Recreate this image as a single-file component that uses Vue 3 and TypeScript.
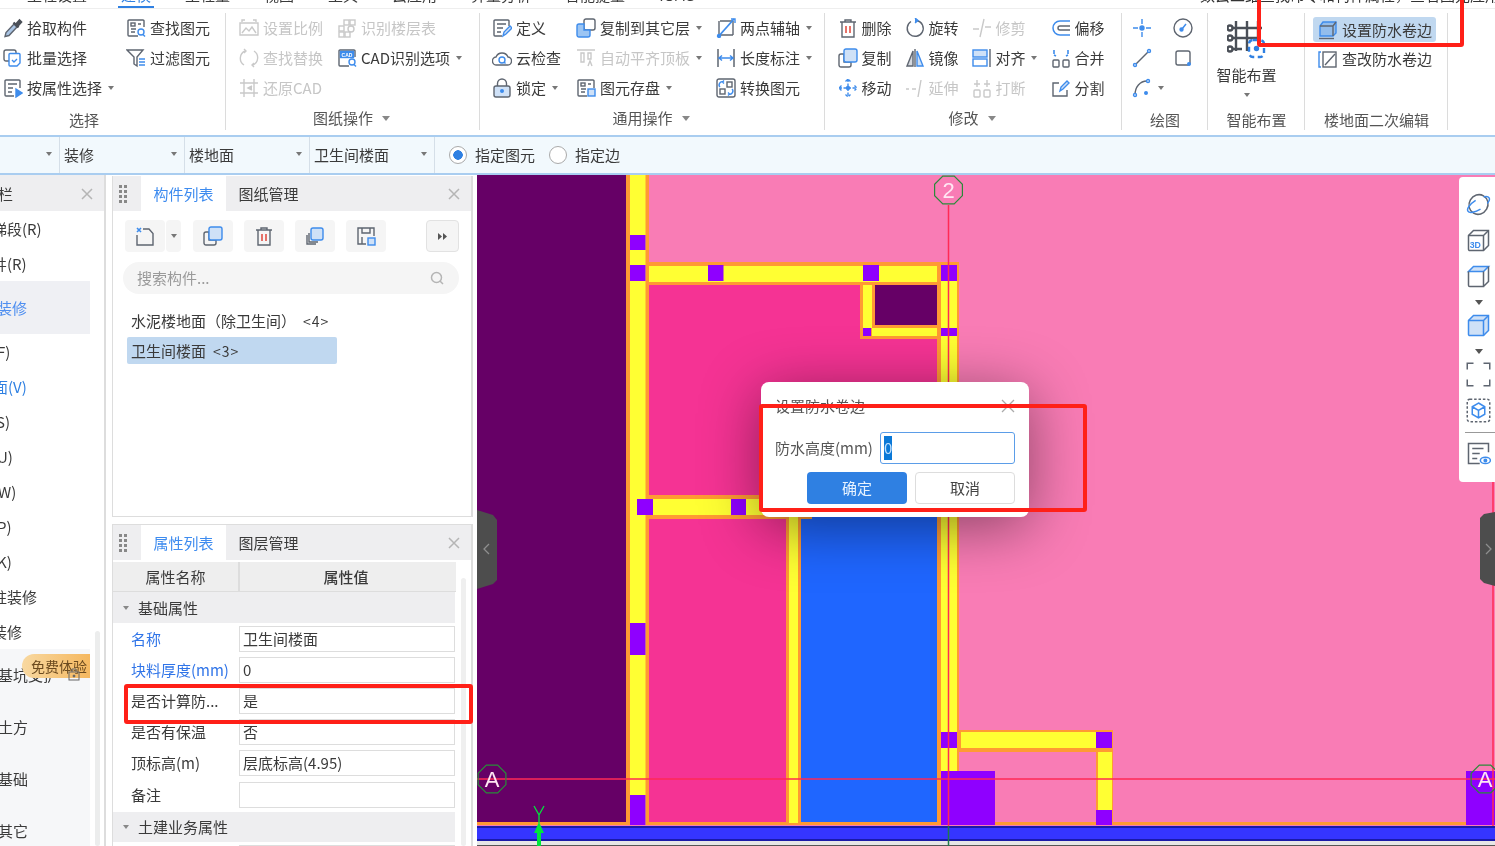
<script setup lang="ts">
interface Tool { i: string; t: string; d?: boolean; a?: boolean }
interface Box { x: number; y: number; w: number; h: number; c: string }

const b = '#3e8cec'
const lf = '#cfe1f7'

// 20x20 icon bodies, stroke colour comes from the parent svg
const icons: Record<string, string> = {
  pick: `<path d="M11 6l3 3-8 8.500-4 1 1-4z" fill="#a9c4e4"/><path d="M10.500 4.500l5 5M13 6.500l3.500-4 1.500 1.500-3.500 4" stroke-width="2.400" stroke="#4a4f57"/>`,
  batch: `<rect x="1" y="2" width="12" height="11" rx="2"/><path d="M6 6.500a1 1 0 0 1 1-1h9a1 1 0 0 1 1 1V15l-3 3H7a1 1 0 0 1-1-1z" fill="#fff" stroke="${b}"/><path d="M9 12l2 2 3-3" stroke="${b}"/>`,
  attr: `<path d="M17 10V3a1 1 0 0 0-1-1H3a1 1 0 0 0-1 1v14a1 1 0 0 0 1 1h8"/><path d="M5 6h9M5 10h5M5 14h4"/><path d="M13 11l6 4-6 4z" fill="${b}" stroke="${b}"/>`,
  find: `<path d="M18 9V3a1 1 0 0 0-1-1H3a1 1 0 0 0-1 1v14a1 1 0 0 0 1 1h9"/><rect x="5" y="5" width="4" height="3"/><path d="M12 6h3M5 11h5M5 14h4"/><circle cx="15" cy="14" r="3" stroke="${b}"/><path d="M17 16.500l2 2" stroke="${b}"/>`,
  filter: `<path d="M1 2h16l-6 7v9l-3-2V9z"/><path d="M13 11h6M13 14h6M13 17h6" stroke="${b}"/>`,
  scale: `<path d="M3 4v-2h3M14 2h3v2M1 5h18v12H1z"/><path d="M3 15l4-5 3 3 3-4 4 6"/>`,
  floors: `<rect x="7" y="2" width="5" height="5"/><rect x="13" y="2" width="5" height="5"/><rect x="2" y="8" width="5" height="5"/><rect x="2" y="14" width="5" height="5"/><rect x="8" y="14" width="5" height="5"/><circle cx="14" cy="11" r="3"/>`,
  replace: `<path d="M6 3a8 8 0 0 0-1 14M14 17a8 8 0 0 0 1-14"/><path d="M5 1l2 2-2 2M15 15l-2 2 2 2"/>`,
  cadopt: `<path d="M18 9V3a1 1 0 0 0-1-1H3a1 1 0 0 0-1 1v14a1 1 0 0 0 1 1h9"/><rect x="3.500" y="3.500" width="13" height="6" fill="${b}" stroke="${b}"/><text x="10" y="8.600" text-anchor="middle" font-size="5" font-weight="700" font-family="Liberation Sans" fill="#fff" stroke="none">CAD</text><circle cx="15" cy="14" r="3" stroke="${b}"/><path d="M17 16.500l2 2" stroke="${b}"/>`,
  restore: `<path d="M5 1v18M15 1v18M1 5h18M1 15h18"/><path d="M13 8l-4 2 4 2" fill="#c9c9c9"/>`,
  define: `<path d="M17 8V3a1 1 0 0 0-1-1H3a1 1 0 0 0-1 1v14a1 1 0 0 0 1 1h7"/><path d="M5 6h9M5 10h6M5 14h4"/><path d="M11 18l1-4 6-6 2 2-6 6z" fill="${lf}" stroke="${b}"/>`,
  cloud: `<path d="M5 17a4 4 0 0 1-1-8 6.500 6.500 0 0 1 12 0 4 4 0 0 1-1 8z"/><circle cx="10" cy="12" r="3" stroke="${b}"/><path d="M12 14l1.500 1.500" stroke="${b}"/>`,
  lock: `<rect x="2" y="8" width="16" height="11" rx="2" fill="${lf}"/><path d="M5.500 8V5.500a4.500 4.500 0 0 1 9 0V8"/><circle cx="10" cy="13" r="1.300" fill="${b}" stroke="${b}"/>`,
  copylayer: `<rect x="8" y="1" width="11" height="11" rx="2"/><path d="M3 6h5v6h6v5a2 2 0 0 1-2 2H3a2 2 0 0 1-2-2V8a2 2 0 0 1 2-2z" fill="#9cc5f3" stroke="${b}"/>`,
  autotop: `<path d="M1 2h18M5 5h3v9H5zM12 5h3v6h-3z"/><path d="M12 18l2-5 2 5"/>`,
  store: `<path d="M18 10V3a1 1 0 0 0-1-1H3a1 1 0 0 0-1 1v14a1 1 0 0 0 1 1h8"/><rect x="5" y="5" width="4" height="3"/><path d="M12 6h3M5 11h5M5 14h4"/><rect x="12" y="11" width="7" height="7" fill="${lf}" stroke="${b}"/>`,
  twopoint: `<path d="M4 3h13M17 3v14M3 3v14h14"/><path d="M2 19L18 1" stroke="${b}" stroke-width="1.800"/><circle cx="3" cy="18" r="1.500" fill="${b}" stroke="${b}"/><path d="M15 1h4v4" stroke="${b}"/>`,
  dimension: `<path d="M2 1v18M18 1v18" stroke-width="1.500"/><path d="M3 10h14M6 7.500L3 10l3 2.500M14 7.500l3 2.500-3 2.500" stroke="${b}" stroke-width="1.500"/>`,
  convert: `<rect x="1" y="1" width="18" height="18" rx="2"/><rect x="11" y="4" width="5" height="5"/><rect x="4" y="11" width="5" height="5"/><path d="M4 9a3 3 0 0 1 3-5M16 11a3 3 0 0 1-3 5M8 2.500L6.500 4 8 5.500M12 14.500l1.500 1.500-1.500 1.500" stroke="${b}"/>`,
  del: `<path d="M2 4h16M7 4V2h6v2M4 4v15h12V4"/><path d="M8 8v7M12 8v7" stroke="#e0453a" stroke-width="1.500"/>`,
  rotate: `<path d="M12 2.500A8 8 0 1 1 6 3.500"/><path d="M10 0l3 2.500-3 2.500" fill="${b}" stroke="${b}"/>`,
  trim: `<path d="M1 11h6M13 9h6M12 1L8 19"/>`,
  offset: `<path d="M19 3H9a7 7 0 0 0 0 14h10" stroke="${b}" stroke-width="1.500"/><path d="M19 8H9a2 2 0 0 0 0 4h10"/>`,
  copy: `<path d="M1 8a2 2 0 0 1 2-2h3v8h7v3a2 2 0 0 1-2 2H3a2 2 0 0 1-2-2z"/><rect x="6" y="1" width="13" height="13" rx="2" fill="${lf}" stroke="${b}"/>`,
  mirror: `<path d="M8 3L2 18h6z" fill="#d5d9df"/><path d="M12 3l6 15h-6z" fill="${lf}" stroke="${b}"/><path d="M10 1v18"/>`,
  align: `<rect x="1" y="2" width="14" height="7" stroke="${b}" fill="${lf}"/><rect x="1" y="11" width="14" height="7" stroke="${b}"/><path d="M18 1v18"/>`,
  merge: `<rect x="2" y="12" width="6" height="7" rx="1"/><rect x="12" y="12" width="6" height="7" rx="1"/><path d="M3 2v4M3 7l2 1M17 2v4M17 7l-2 1" stroke="${b}" stroke-width="1.600"/>`,
  move: `<path d="M10 1v18M1 10h18M7.500 3.500L10 1l2.500 2.500M7.500 16.500L10 19l2.500-2.500M3.500 7.500L1 10l2.500 2.500M16.500 7.500L19 10l-2.500 2.500" stroke="${b}" stroke-dasharray="3 1.500"/><circle cx="10" cy="10" r="1.500" fill="${b}" stroke="${b}"/>`,
  extend: `<path d="M1 11h3M7 11h4M16 2l-3 17"/>`,
  break: `<rect x="2" y="12" width="6" height="7" rx="1"/><rect x="12" y="12" width="6" height="7" rx="1"/><path d="M5 2v7M15 2v7M2 6h6M12 6h6"/>`,
  split: `<path d="M8 5H2v13h14v-6"/><path d="M9 13l1-4 6-6 2 2-6 6z" fill="${lf}" stroke="${b}"/>`,
  point: `<path d="M10 1v5M10 14v5M1 10h5M14 10h5" stroke="${b}"/><circle cx="10" cy="10" r="2" fill="${b}" stroke="${b}"/>`,
  gauge: `<circle cx="10" cy="10" r="9"/><path d="M9 11l4-5" stroke="${b}" stroke-width="1.500"/><circle cx="8.500" cy="11.500" r="1.500" fill="${b}" stroke="${b}"/>`,
  line: `<path d="M4 16L16 4"/><circle cx="3" cy="17" r="1.500" fill="#fff" stroke="${b}"/><circle cx="17" cy="3" r="1.500" fill="#fff" stroke="${b}"/>`,
  rect: `<rect x="3" y="3" width="14" height="14" rx="2"/><circle cx="16" cy="16" r="1.300" fill="${b}" stroke="${b}"/>`,
  arc: `<path d="M3 17C3 9 8 3 15 3"/><circle cx="3" cy="17" r="1.500" fill="#fff" stroke="${b}"/><circle cx="16" cy="3" r="1.500" fill="#fff" stroke="${b}"/><circle cx="14" cy="15" r="1.300" fill="${b}" stroke="${b}"/>`,
  wp: `<path d="M2 6l3-4h13v11l-3 3H2z" fill="#93bdec" stroke="${b}"/><path d="M2 6h13v10M15 6l3-4"/><path d="M1 18.500h15"/>`,
  wpedit: `<path d="M3 3H1v15h2" stroke="${b}"/><rect x="5" y="3" width="13" height="15"/><path d="M7 16L17 5"/>`,
  newdoc: `<path d="M8 3h6l4 4.500V19H2V9"/><path d="M2 2l4 4M6 2L2 6" stroke="${b}" stroke-width="1.600"/>`,
  copy2: `<path d="M2 9v9h9"/><path d="M4 7v9h9"/><rect x="6" y="2" width="12" height="12" rx="2" fill="${lf}" stroke="${b}"/>`,
  save: `<path d="M10 18H2V2h16v8"/><path d="M6 2v5h8V2M6 18v-7"/><rect x="12" y="12" width="7" height="7" fill="${lf}" stroke="${b}"/>`,
  orbit: `<ellipse cx="10" cy="10" rx="7.500" ry="8" transform="rotate(30 10 10)"/><ellipse cx="10" cy="10" rx="10" ry="4" transform="rotate(-32 10 10)" stroke="${b}" stroke-dasharray="22 7" stroke-dashoffset="-12"/>`,
  d3: `<path d="M2 6l4-4h12v12l-4 4H3a1 1 0 0 1-1-1z"/><path d="M2 6h12v12M14 6l4-4"/><text x="3" y="16" font-size="7" font-weight="700" font-family="Liberation Sans" fill="${b}" stroke="none">3D</text>`,
  cubetop: `<path d="M2 6l4-4h12l-4 4z" fill="${lf}" stroke="${b}"/><path d="M2 6v11a1 1 0 0 0 1 1h11V6M14 18l4-4V2"/>`,
  cubefront: `<path d="M2 6l4-4h12v12l-4 4H3a1 1 0 0 1-1-1z" fill="${lf}" stroke="${b}"/><path d="M2 6h12v12M14 6l4-4" stroke="${b}"/>`,
  corners: `<path d="M1 6V1h5M14 1h5v5M19 14v5h-5M6 19H1v-5"/>`,
  dashcube: `<rect x="1" y="1" width="18" height="18" rx="2" stroke-dasharray="2 1.500"/><path d="M10 4l5 3v6l-5 3-5-3V7zM5 7l5 3 5-3M10 10v6" stroke="${b}"/>`,
  listeye: `<path d="M18 9V2H2v16h9"/><path d="M5 6h9M5 10h6M5 14h4"/><ellipse cx="15.500" cy="15.500" rx="4" ry="2.500" stroke="${b}"/><circle cx="15.500" cy="15.500" r="1" fill="${b}" stroke="${b}"/>`,
}

const mainTabs = ['工程设置', '建模', '工程量', '视图', '工具', '云应用', '算量分析', '智能提量', 'IGMS']

const select: Tool[] = [
  { i: 'pick', t: '拾取构件' }, { i: 'find', t: '查找图元' },
  { i: 'batch', t: '批量选择' }, { i: 'filter', t: '过滤图元' },
  { i: 'attr', t: '按属性选择', a: true },
]
const drawing: Tool[] = [
  { i: 'scale', t: '设置比例', d: true }, { i: 'floors', t: '识别楼层表', d: true },
  { i: 'replace', t: '查找替换', d: true }, { i: 'cadopt', t: 'CAD识别选项', a: true },
  { i: 'restore', t: '还原CAD', d: true },
]
const common: Tool[] = [
  { i: 'define', t: '定义' }, { i: 'copylayer', t: '复制到其它层', a: true }, { i: 'twopoint', t: '两点辅轴', a: true },
  { i: 'cloud', t: '云检查' }, { i: 'autotop', t: '自动平齐顶板', d: true, a: true }, { i: 'dimension', t: '长度标注', a: true },
  { i: 'lock', t: '锁定', a: true }, { i: 'store', t: '图元存盘', a: true }, { i: 'convert', t: '转换图元' },
]
const modify: Tool[] = [
  { i: 'del', t: '删除' }, { i: 'rotate', t: '旋转' }, { i: 'trim', t: '修剪', d: true }, { i: 'offset', t: '偏移' },
  { i: 'copy', t: '复制' }, { i: 'mirror', t: '镜像' }, { i: 'align', t: '对齐', a: true }, { i: 'merge', t: '合并' },
  { i: 'move', t: '移动' }, { i: 'extend', t: '延伸', d: true }, { i: 'break', t: '打断', d: true }, { i: 'split', t: '分割' },
]

const sideItems = [
  { t: '梯段(R)', x: -8 }, { t: '井(R)', x: -8 },
  { t: '装修', x: -3, on: true, tall: true },
  { t: 'F)', x: -3 }, { t: '面(V)', x: -7, blue: true }, { t: 'S)', x: -4 }, { t: 'U)', x: -3 },
  { t: 'W)', x: -2 }, { t: 'P)', x: -3 }, { t: 'K)', x: -3 }, { t: '柱装修', x: -8 }, { t: '装修', x: -8 },
]
const sideLower = ['基坑支护', '土方', '基础', '其它']

const propRows = [
  { n: '名称', v: '卫生间楼面', blue: true },
  { n: '块料厚度(mm)', v: '0', blue: true },
  { n: '是否计算防...', v: '是' },
  { n: '是否有保温', v: '否' },
  { n: '顶标高(m)', v: '层底标高(4.95)' },
  { n: '备注', v: '' },
]

const O = '#ff9a33'
const Y = '#ffff33'
const P = '#8f00ff'
const wall = (x: number, y: number, w: number, h: number): Box => ({ x, y, w, h, c: O })
const fill = (x: number, y: number, w: number, h: number): Box => ({ x, y, w, h, c: Y })
const sq = (x: number, y: number, w: number, h: number): Box => ({ x, y, w, h, c: P })

const shapes: Box[] = [
  { x: 477, y: 175, w: 150, h: 648, c: '#660066' },
  { x: 649, y: 285, w: 292, h: 212, c: '#f53394' },
  { x: 649, y: 517, w: 137, h: 306, c: '#f53394' },
  { x: 801, y: 517, w: 137, h: 306, c: '#1f66ff' },
  wall(477, 822, 989, 3),
  wall(626, 175, 23, 650), wall(638, 262, 321, 23), wall(860, 283, 15, 56), wall(860, 325, 99, 14),
  wall(937, 262, 22, 563), wall(637, 495, 175, 24), wall(786, 515, 15, 310),
  wall(957, 730, 156, 22), wall(1096, 730, 17, 95),
  { x: 875, y: 285, w: 62, h: 40, c: '#660066' },
  fill(630, 175, 15.5, 650), fill(649, 266, 288, 16), fill(863, 285, 9, 43), fill(872, 328, 65, 8),
  fill(941, 265, 16, 560), fill(641, 499, 170, 16), fill(789, 517, 9, 306),
  fill(961, 732, 135, 16), fill(1098, 752, 14, 58),
  sq(630, 235, 15.5, 15), sq(630, 265, 15.5, 16), sq(708, 265, 15.5, 16), sq(863, 265, 16, 16), sq(941, 265, 16, 16),
  sq(863, 328, 8, 8), sq(941, 328, 16, 8), sq(637, 499, 16, 16), sq(731, 499, 15, 16),
  sq(630, 623, 15.5, 32), sq(630, 795, 15.5, 30), sq(941, 732, 16, 16), sq(1096, 732, 16, 16),
  sq(1096, 810, 16, 15), sq(941, 771, 54, 54), sq(1466, 771, 29, 54),
  { x: 477, y: 826, w: 1018, h: 15, c: '#1a1aa8' },
  { x: 477, y: 828, w: 1018, h: 11, c: '#3535ff' },
  { x: 477, y: 841, w: 1018, h: 4, c: '#e6e6e6' },
  { x: 477, y: 845, w: 1018, h: 1, c: '#555555' },
]

function ring(cx: number, cy: number, r = 15, n = 8): string {
  const pts: string[] = []
  for (let k = 0; k < n; k++) {
    const a = (k / n) * Math.PI * 2 + Math.PI / 8
    pts.push(`${(cx + Math.cos(a) * r).toFixed(1)},${(cy + Math.sin(a) * r).toFixed(1)}`)
  }
  return pts.join(' ')
}
const marks = [
  { x: 948.5, y: 190, t: '2' },
  { x: 492, y: 779, t: 'A' },
  { x: 1485, y: 779, t: 'A' },
]

const railTop = ['orbit', 'd3', 'cubetop']
</script>

<template>
  <div class="app">
    <div class="menu">
      <span v-for="(m, k) in mainTabs" :key="m" class="menu-tab" :class="{ on: k === 1 }">{{ m }}</span>
      <span class="menu-search">数云二维查找命令和构件属性，查看图元应用</span>
    </div>

    <div class="ribbon">
      <section class="group g1">
        <div class="tools">
          <div v-for="x in select" :key="x.t" class="tool" :class="{ off: x.d }">
            <svg class="ico" viewBox="0 0 20 20" fill="none" :stroke="x.d ? '#c9c9c9' : '#5e6570'" stroke-width="1.400" v-html="icons[x.i]"></svg>
            <span>{{ x.t }}</span><i v-if="x.a" class="caret"></i>
          </div>
        </div>
        <div class="glabel low">选择</div>
      </section>
      <section class="group g2">
        <div class="tools">
          <div v-for="x in drawing" :key="x.t" class="tool" :class="{ off: x.d }">
            <svg class="ico" viewBox="0 0 20 20" fill="none" :stroke="x.d ? '#c9c9c9' : '#5e6570'" stroke-width="1.400" v-html="icons[x.i]"></svg>
            <span>{{ x.t }}</span><i v-if="x.a" class="caret"></i>
          </div>
        </div>
        <div class="glabel">图纸操作<i class="caret big"></i></div>
      </section>
      <section class="group g3">
        <div class="tools">
          <div v-for="x in common" :key="x.t" class="tool" :class="{ off: x.d }">
            <svg class="ico" viewBox="0 0 20 20" fill="none" :stroke="x.d ? '#c9c9c9' : '#5e6570'" stroke-width="1.400" v-html="icons[x.i]"></svg>
            <span>{{ x.t }}</span><i v-if="x.a" class="caret"></i>
          </div>
        </div>
        <div class="glabel">通用操作<i class="caret big"></i></div>
      </section>
      <section class="group g4">
        <div class="tools">
          <div v-for="x in modify" :key="x.t" class="tool" :class="{ off: x.d }">
            <svg class="ico" viewBox="0 0 20 20" fill="none" :stroke="x.d ? '#c9c9c9' : '#5e6570'" stroke-width="1.400" v-html="icons[x.i]"></svg>
            <span>{{ x.t }}</span><i v-if="x.a" class="caret"></i>
          </div>
        </div>
        <div class="glabel">修改<i class="caret big"></i></div>
      </section>
      <section class="group g5">
        <div class="tools">
          <div v-for="x in ['point', 'gauge', 'line', 'rect', 'arc']" :key="x" class="tool">
            <svg class="ico" viewBox="0 0 20 20" fill="none" stroke="#5e6570" stroke-width="1.400" v-html="icons[x]"></svg>
            <i v-if="x === 'arc'" class="caret"></i>
          </div>
        </div>
        <div class="glabel low">绘图</div>
      </section>
      <section class="group g6">
        <div class="smart">
          <svg width="40" height="40" viewBox="0 0 40 40" fill="none" stroke="#4a4f57" stroke-width="2.400">
            <path d="M9 1v30M20 1v30M31 1v16M1 8h34M1 18h30M1 29h14" />
            <circle cx="3" cy="8" r="2.500" fill="#fff" />
            <circle cx="3" cy="18" r="2.500" fill="#fff" />
            <circle cx="3" cy="29" r="2.500" fill="#fff" />
            <rect x="22" y="20" width="15" height="17" rx="4" stroke="#2f80e2" stroke-dasharray="5 3.500" />
            <circle cx="29.500" cy="28.500" r="1.500" fill="#2f80e2" stroke="#2f80e2" />
          </svg>
          <span>智能布置</span>
          <i class="caret"></i>
        </div>
        <div class="glabel low">智能布置</div>
      </section>
      <section class="group g7">
        <div class="stack">
          <div class="tool hot">
            <svg class="ico" viewBox="0 0 20 20" fill="none" stroke="#5e6570" stroke-width="1.400" v-html="icons.wp"></svg>
            <span>设置防水卷边</span>
          </div>
          <div class="tool plain">
            <svg class="ico" viewBox="0 0 20 20" fill="none" stroke="#5e6570" stroke-width="1.400" v-html="icons.wpedit"></svg>
            <span>查改防水卷边</span>
          </div>
        </div>
        <div class="glabel low">楼地面二次编辑</div>
      </section>
    </div>

    <div class="selector">
      <div class="sel first"><i class="caret"></i></div>
      <div class="sel">装修<i class="caret"></i></div>
      <div class="sel">楼地面<i class="caret"></i></div>
      <div class="sel">卫生间楼面<i class="caret"></i></div>
      <label class="radio"><i class="dot on"></i>指定图元</label>
      <label class="radio second"><i class="dot"></i>指定边</label>
    </div>

    <div class="main">
      <aside class="side">
        <div class="side-head"><span>栏</span><svg class="close" viewBox="0 0 12 12"><path d="M1 1l10 10M11 1L1 11" /></svg></div>
        <div v-for="s in sideItems" :key="s.t + s.x" class="side-item" :class="{ on: s.on, tall: s.tall, blue: s.blue }">
          <span :style="{ marginLeft: s.x + 'px' }">{{ s.t }}</span>
        </div>
        <div class="side-lower">
          <div v-for="s in sideLower" :key="s" class="side-item tall"><span class="lower-text">{{ s }}</span></div>
          <span class="badge">免费体验</span>
          <svg class="side-lock" viewBox="0 0 12 14" fill="none" stroke="#666"><rect x="1" y="5" width="10" height="8" /><path d="M4 5V2h4v3" /><circle cx="6" cy="9" r="1" fill="#666" /></svg>
        </div>
        <div class="side-scroll"></div>
      </aside>

      <div class="panels">
        <section class="panel list-panel">
          <header class="p-head">
            <span class="grip"><i v-for="n in 8" :key="n"></i></span>
            <span class="p-tab on">构件列表</span>
            <span class="p-tab">图纸管理</span>
            <svg class="close end" viewBox="0 0 12 12"><path d="M1 1l10 10M11 1L1 11" /></svg>
          </header>
          <div class="p-tools">
            <button class="pbtn wide"><svg class="ico" viewBox="0 0 20 20" fill="none" stroke="#5e6570" stroke-width="1.400" v-html="icons.newdoc"></svg></button>
            <button class="pbtn drop"><i class="caret"></i></button>
            <button v-for="x in ['copy', 'del', 'copy2', 'save']" :key="x" class="pbtn"><svg class="ico" viewBox="0 0 20 20" fill="none" stroke="#5e6570" stroke-width="1.400" v-html="icons[x]"></svg></button>
            <button class="pbtn more"><svg width="9" height="7" viewBox="0 0 9 7" fill="#555"><path d="M0 0l4 3.500L0 7zM5 0l4 3.500L5 7z" /></svg></button>
          </div>
          <div class="search">
            <span>搜索构件...</span>
            <svg width="14" height="14" viewBox="0 0 14 14" fill="none" stroke="#b5b5b5" stroke-width="1.500"><circle cx="6.500" cy="6.500" r="5" /><path d="M10 10l3 3" /></svg>
          </div>
          <div class="comp">水泥楼地面（除卫生间）<em>&lt;4&gt;</em></div>
          <div class="comp picked">卫生间楼面<em>&lt;3&gt;</em></div>
        </section>

        <section class="panel prop-panel">
          <header class="p-head">
            <span class="grip"><i v-for="n in 8" :key="n"></i></span>
            <span class="p-tab on">属性列表</span>
            <span class="p-tab">图层管理</span>
            <svg class="close end" viewBox="0 0 12 12"><path d="M1 1l10 10M11 1L1 11" /></svg>
          </header>
          <div class="t-head"><span class="tn">属性名称</span><span class="tv">属性值</span></div>
          <div class="t-group"><i class="tri"></i>基础属性</div>
          <div v-for="r in propRows" :key="r.n" class="t-row">
            <span class="rn" :class="{ blue: r.blue }">{{ r.n }}</span>
            <span class="rv">{{ r.v }}</span>
          </div>
          <div class="t-group last"><i class="tri"></i>土建业务属性</div>
          <div class="t-row"><span class="rn"></span><span class="rv"></span></div>
          <div class="prop-scroll"></div>
        </section>
      </div>

      <div class="canvas">
        <svg class="drawing" viewBox="477 175 1018 671" width="1018" height="671">
          <rect x="477" y="175" width="1018" height="671" fill="#f97cb5" />
          <rect v-for="(s, k) in shapes" :key="k" :x="s.x" :y="s.y" :width="s.w" :height="s.h" :fill="s.c" />
          <path d="M948.500 205V826M477 779H1495M1493 480V826" stroke="#ff2a55" stroke-width="1.500" fill="none" />
          <path d="M948.500 826V846" stroke="#1f7a4a" stroke-width="1.500" />
          <g v-for="m in marks" :key="m.x">
            <polygon :points="ring(m.x, m.y)" fill="none" stroke="#2a8a3a" stroke-width="1.200" />
            <text :x="m.x" :y="m.y + 8" text-anchor="middle" class="mark">{{ m.t }}</text>
          </g>
          <path d="M477 510l16 5 4 5v60l-4 4-16 5z" fill="#4d4d4d" />
          <path d="M1495 512l-11 2-4 4v61l4 4 11 3z" fill="#4d4d4d" />
          <path d="M489 544l-5 5 5 5M1486 544l5 5-5 5" fill="none" stroke="#8e8e8e" stroke-width="1.300" />
          <path d="M534 806l5 9 5-9M539 815v8" fill="none" stroke="#00e63c" stroke-width="1.300" />
          <path d="M539 822l-5 11h3v13h4v-13h3z" fill="#00e63c" />
        </svg>

        <div class="rail">
          <svg v-for="x in railTop" :key="x" class="rail-ico" viewBox="0 0 20 20" fill="none" stroke="#5e6570" stroke-width="1.200" v-html="icons[x]"></svg>
          <i class="rail-arrow"></i>
          <svg class="rail-ico" viewBox="0 0 20 20" fill="none" stroke="#5e6570" stroke-width="1.200" v-html="icons.cubefront"></svg>
          <i class="rail-arrow"></i>
          <svg class="rail-ico" viewBox="0 0 20 20" fill="none" stroke="#5e6570" stroke-width="1.200" v-html="icons.corners"></svg>
          <svg class="rail-ico" viewBox="0 0 20 20" fill="none" stroke="#5e6570" stroke-width="1.200" v-html="icons.dashcube"></svg>
          <hr />
          <svg class="rail-ico" viewBox="0 0 20 20" fill="none" stroke="#5e6570" stroke-width="1.200" v-html="icons.listeye"></svg>
        </div>

        <div class="dialog">
          <div class="d-title">设置防水卷边<svg class="d-close" viewBox="0 0 14 14"><path d="M1 1l12 12M13 1L1 13" /></svg></div>
          <div class="d-field">
            <span>防水高度(mm)</span>
            <div class="d-input"><b>0</b></div>
          </div>
          <div class="d-actions">
            <button class="ok">确定</button>
            <button class="no">取消</button>
          </div>
        </div>
      </div>
    </div>

    <div class="mark-box one"></div>
    <div class="mark-box two"></div>
    <div class="mark-box three"></div>
  </div>
</template>

<style>
html, body { margin: 0; background: #fff; }
</style>

<style scoped>
.app {
  position: relative;
  width: 1495px;
  height: 846px;
  overflow: hidden;
  display: flex;
  flex-direction: column;
  background: #fff;
  color: #3a3a3a;
  font: 15px/20px "Noto Sans CJK SC", "Noto Sans", sans-serif;
  filter: blur(0.3px);
}
i { display: block; font-style: normal; }

.menu {
  position: relative;
  height: 9px;
  flex: none;
  display: flex;
  gap: 34px;
  padding-left: 27px;
  border-bottom: 1px solid #eee;
  box-sizing: border-box;
}
.menu-tab { position: relative; margin-top: -15px; height: 23px; white-space: nowrap; }
.menu-tab.on { color: #2f80e2; }
.menu-tab.on::after {
  content: "";
  position: absolute;
  left: -3px;
  right: -3px;
  bottom: 0;
  height: 2px;
  background: #2f80e2;
}
.menu-search {
  position: absolute;
  left: 1200px;
  top: -15px;
  white-space: nowrap;
  color: #333;
}

.ribbon { height: 126px; flex: none; display: flex; }
.group {
  position: relative;
  box-sizing: border-box;
  flex: none;
  padding-top: 4px;
}
.group::after {
  content: "";
  position: absolute;
  right: 0;
  top: 4px;
  height: 117px;
  width: 1px;
  background: #dcdcdc;
}
.tools { display: grid; grid-auto-rows: 30px; }
.tool { display: flex; align-items: center; gap: 4px; white-space: nowrap; min-width: 0; }
.tool.off { color: #c6c6c6; }
.ico { width: 20px; height: 20px; flex: none; }
.caret {
  width: 0;
  height: 0;
  margin-left: 2px;
  border: 3px solid transparent;
  border-top: 4px solid #777;
  border-bottom: 0;
  flex: none;
}
.caret.big { margin-left: 9px; border-width: 5px 4.5px 0; border-top-color: #888; border-bottom: 0; }
.glabel {
  position: absolute;
  left: 0;
  right: 3px;
  top: 99px;
  display: flex;
  justify-content: center;
  align-items: center;
  color: #555;
}
.glabel.low { top: 101px; right: 0; }
.g1 { width: 226px; padding-left: 3px; }
.g1 .glabel { right: 58px; }
.g1 .tools { grid-template-columns: 123px 100px; }
.g2 { width: 254px; padding-left: 13px; }
.g2 .tools { grid-template-columns: 98px 140px; }
.g3 { width: 345px; padding-left: 12px; }
.g3 .tools { grid-template-columns: 84px 140px 110px; }
.g4 { width: 297px; padding-left: 13px; }
.g4 .tools { grid-template-columns: 67px 67px 79px 60px; }
.g4 .tool { gap: 3.5px; }
.g5 { width: 86px; padding-left: 10px; }
.g5 .tools { grid-template-columns: 41px 34px; }
.g6 { width: 97px; }
.g7 { width: 143px; }
.smart {
  display: flex;
  flex-direction: column;
  align-items: center;
  padding: 7px 20px 0 0;
}
.smart span { margin-top: 5px; line-height: 20px; }
.smart .caret { margin: 8px 0 0; }
.stack { padding-left: 8px; }
.tool.hot {
  width: 123px;
  height: 25px;
  margin-top: 4px;
  padding-left: 5px;
  box-sizing: border-box;
  background: #c0d8f0;
  border-radius: 3px;
}
.tool.plain { height: 30px; margin-top: 2px; padding-left: 5px; }

.selector {
  height: 40px;
  flex: none;
  display: flex;
  align-items: center;
  box-sizing: border-box;
  background: #f2f9fd;
  border-top: 2px solid #a9cdf0;
  border-bottom: 2px solid #a9cdf0;
}
.sel {
  position: relative;
  width: 125px;
  height: 100%;
  flex: none;
  box-sizing: border-box;
  padding-left: 4px;
  display: flex;
  align-items: center;
  border-right: 1px solid #d5dfe8;
}
.sel.first { width: 60px; }
.sel .caret { position: absolute; right: 7px; top: 15px; }
.radio { display: flex; align-items: center; gap: 8px; margin-left: 14px; }
.radio.second { margin-left: 14px; }
.dot {
  width: 18px;
  height: 18px;
  box-sizing: border-box;
  border-radius: 50%;
  border: 1px solid #aaa;
  background: #fff;
}
.dot.on { background: radial-gradient(circle, #2f80e2 0 4.5px, #fff 5px); }

.main { flex: 1; min-height: 0; display: flex; }

.side {
  position: relative;
  width: 106px;
  flex: none;
  box-sizing: border-box;
  border-right: 2px solid #ddd;
}
.side-head {
  height: 36px;
  display: flex;
  align-items: center;
  justify-content: space-between;
  padding: 2px 11px 0 0;
  box-sizing: border-box;
  background: #eeeef0;
}
.side-head span { margin-left: -2px; }
.close { width: 12px; height: 12px; fill: none; stroke: #b5b5b5; stroke-width: 1.5; }
.side-item {
  width: 90px;
  height: 35px;
  display: flex;
  align-items: center;
  white-space: nowrap;
  overflow: hidden;
}
.side-item.tall { height: 52px; }
.side-item.on { height: 53px; background: #eff0f4; color: #4f8ff0; }
.side-item.blue { color: #2f80e2; }
.side-lower {
  position: absolute;
  left: 0;
  top: 474px;
  width: 90px;
  background: #f6f7f9;
}
.lower-text { margin-left: -2px; }
.badge {
  position: absolute;
  left: 22px;
  top: 5px;
  width: 68px;
  height: 24px;
  line-height: 24px;
  padding-left: 9px;
  box-sizing: border-box;
  font-size: 14px;
  white-space: nowrap;
  border-radius: 12px 0 0 12px;
  background: linear-gradient(90deg, #f8d8a0, #f5b860);
  color: #6b4a1f;
}
.side-lock { position: absolute; left: 68px; top: 18px; width: 12px; height: 14px; }
.side-scroll {
  position: absolute;
  left: 95px;
  top: 456px;
  bottom: 0;
  width: 5px;
  border-radius: 3px;
  background: #eceded;
}

.panels {
  width: 361px;
  flex: none;
  margin-left: 6px;
  display: flex;
  flex-direction: column;
  gap: 7px;
}
.panel {
  position: relative;
  box-sizing: border-box;
  border: 1px solid #ddd;
  border-width: 1px 2px 1px 1px;
}
.list-panel { height: 341px; margin-top: 1px; border-top: 0; }
.prop-panel { flex: 1; min-height: 0; overflow: hidden; border-bottom: 0; }
.p-head {
  height: 35px;
  display: flex;
  align-items: center;
  background: #eeeef0;
}
.grip {
  width: 8px;
  margin: 0 14px 0 6px;
  display: grid;
  grid-template-columns: 3px 3px;
  gap: 2px;
}
.grip i { width: 3px; height: 3px; background: #888; }
.p-tab {
  width: 85px;
  height: 100%;
  display: flex;
  align-items: center;
  justify-content: center;
}
.p-tab.on { background: #fff; color: #3d8bef; }
.close.end { margin-left: auto; margin-right: 11px; }

.p-tools { display: flex; align-items: flex-start; padding: 9px 0 0 12px; height: 32px; }
.pbtn {
  width: 40px;
  height: 32px;
  padding: 0;
  margin-right: 11px;
  border: 0;
  border-radius: 4px;
  background: #f5f5f5;
  display: flex;
  align-items: center;
  justify-content: center;
}
.pbtn.wide { margin-right: 1px; }
.pbtn.drop { width: 15px; margin-right: 12px; }
.pbtn.drop .caret { margin: 0; }
.pbtn.more { width: 33px; margin: 0 0 0 29px; border: 1px solid #e2e2e2; }
.search {
  height: 32px;
  margin: 10px 12px 0 10px;
  padding: 0 15px 0 14px;
  display: flex;
  align-items: center;
  justify-content: space-between;
  border-radius: 16px;
  background: #f5f5f5;
  color: #9a9a9a;
}
.comp {
  height: 27px;
  line-height: 27px;
  margin-left: 14px;
  padding-left: 4px;
  white-space: nowrap;
}
.comp em { font-style: normal; margin-left: 7px; letter-spacing: 1px; font-size: 14px; }
.search + .comp { margin-top: 13px; margin-bottom: 3px; }
.comp.picked { width: 206px; border-radius: 2px; background: #c0d8f0; }

.t-head {
  display: flex;
  width: 343px;
  height: 30px;
  margin-top: 2px;
  background: #eeeeee;
  border-bottom: 1px solid #ddd;
  box-sizing: border-box;
  line-height: 29px;
  text-align: center;
}
.tn { width: 125px; border-right: 2px solid #ddd; }
.tv { flex: 1; font-weight: 500; padding-right: 4px; }
.t-group {
  width: 342px;
  height: 31px;
  display: flex;
  align-items: center;
  padding-left: 10px;
  box-sizing: border-box;
  background: #eeeef0;
}
.t-group.last { height: 30px; margin-top: 2px; }
.tri {
  width: 0;
  height: 0;
  margin-right: 9px;
  border: 3.5px solid transparent;
  border-top: 4px solid #888;
  border-bottom: 0;
}
.t-row { display: flex; align-items: center; width: 342px; height: 31.2px; }
.rn {
  width: 126px;
  padding-left: 18px;
  box-sizing: border-box;
  white-space: nowrap;
  flex: none;
}
.rn.blue { color: #2f74e8; }
.rv {
  flex: 1;
  height: 26px;
  line-height: 24px;
  padding-left: 3px;
  box-sizing: border-box;
  border: 1px solid #ddd;
}
.prop-scroll {
  position: absolute;
  left: 348px;
  top: 53px;
  bottom: 0;
  width: 5px;
  border-radius: 3px;
  background: #efefef;
}

.canvas { position: relative; width: 1018px; margin-left: 4px; flex: none; }
.drawing { display: block; }
.mark { font: 300 22px "Liberation Sans", sans-serif; fill: #ffe6f3; }

.rail {
  position: absolute;
  left: 982px;
  top: 2px;
  width: 36px;
  height: 305px;
  box-sizing: border-box;
  padding: 15px 0 0 7px;
  display: flex;
  flex-direction: column;
  background: #fff;
  border-radius: 4px 0 0 4px;
}
.rail-ico { width: 25px; height: 25px; margin-bottom: 11px; flex: none; }
.rail-arrow {
  width: 0;
  height: 0;
  margin: 0 0 8px 9px;
  border: 4px solid transparent;
  border-top: 5px solid #555;
  border-bottom: 0;
}
.rail hr { width: 30px; margin: -2px 0 8px -1px; border: 0; border-top: 1px solid #999; }

.dialog {
  position: absolute;
  left: 284px;
  top: 207px;
  width: 268px;
  height: 135px;
  box-sizing: border-box;
  padding: 14px 14px 0;
  background: #fff;
  border-radius: 8px;
  box-shadow: 0 10px 60px rgba(0, 0, 0, 0.45);
}
.d-title {
  position: relative;
  line-height: 20px;
  color: #555;
  white-space: nowrap;
}
.d-close {
  position: absolute;
  right: 0;
  top: 3px;
  width: 14px;
  height: 14px;
  fill: none;
  stroke: #aaa;
  stroke-width: 1.3;
}
.d-field {
  display: flex;
  align-items: center;
  justify-content: space-between;
  margin-top: 16px;
  white-space: nowrap;
  color: #555;
}
.d-input {
  width: 135px;
  height: 32px;
  box-sizing: border-box;
  padding: 3px;
  border: 1px solid #5b9de8;
  border-radius: 3px;
}
.d-input b {
  display: block;
  width: 8px;
  height: 24px;
  line-height: 24px;
  font-weight: 400;
  background: #0a78d7;
  color: #bfe0ff;
}
.d-actions { display: flex; justify-content: flex-end; gap: 8px; margin-top: 8px; }
.d-actions button {
  width: 100px;
  height: 32px;
  padding: 0;
  border-radius: 4px;
  font: inherit;
}
.ok { border: 0; background: #2f80e2; color: #e8f3ff; }
.no { border: 1px solid #ddd; background: #fff; color: #444; }

.mark-box {
  position: absolute;
  box-sizing: border-box;
  border: 4px solid #ff2018;
  border-radius: 3px;
  pointer-events: none;
}
.mark-box.one { left: 1257px; top: -10px; width: 207px; height: 57px; }
.mark-box.two { left: 759px; top: 404px; width: 328px; height: 108px; }
.mark-box.three { left: 124px; top: 684px; width: 349px; height: 40px; }
</style>
